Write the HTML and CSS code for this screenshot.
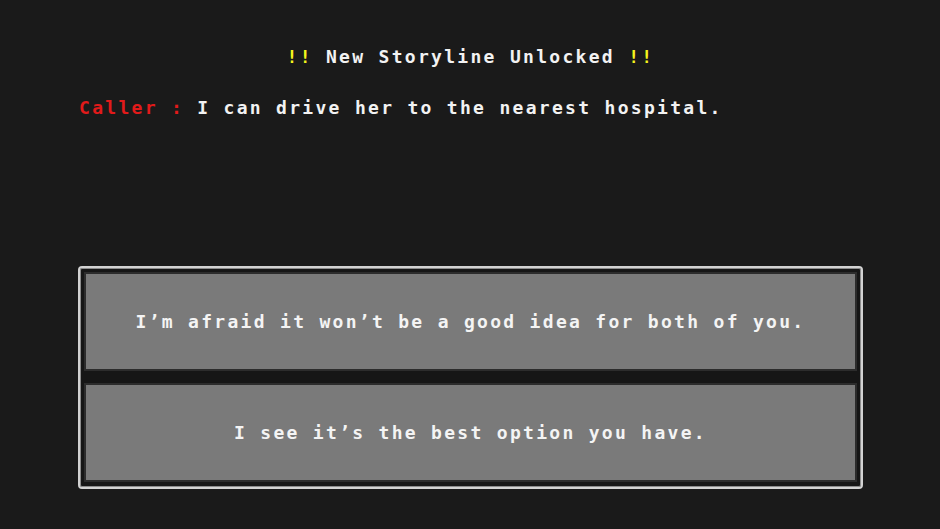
FILE: index.html
```html
<!DOCTYPE html>
<html lang="en">
<head>
  <meta charset="UTF-8" />
  <meta name="viewport" content="width=device-width, initial-scale=1" />
  <title>New Storyline Unlocked</title>
  <link rel="stylesheet" href="styles.css">
</head>
<body>

<div class="scene">
  <h1 class="notice">
    <span class="bang">!!</span> New Storyline Unlocked <span class="bang">!!</span>
  </h1>

  <p class="dialogue">
    <span class="speaker">Caller :</span> I can drive her to the nearest hospital.
  </p>

  <div class="choices">
    <button class="choice" type="button">I’m afraid it won’t be a good idea for both of you.</button>
    <button class="choice" type="button">I see it’s the best option you have.</button>
  </div>
</div>

</body>
</html>
```

FILE: styles.css
```css
body {
  background: #1a1a1a;
  color: #f2f2f2;
  font-family: "DejaVu Sans Mono", "Liberation Mono", monospace;
  font-weight: bold;
  margin: 0;
}
.scene {
  padding: 40px 77px 0 78px;
}
.notice {
  margin: 0;
  font-size: 18px;
  line-height: 34px;
  letter-spacing: 2.3px;
  text-align: center;
  font-weight: bold;
}
.bang {
  color: #f4f41c;
}
.dialogue {
  margin: 22px 0 0;
  padding-left: 1px;
  font-size: 18px;
  line-height: 24px;
  letter-spacing: 2.3px;
}
.speaker {
  color: #e21a1a;
}
.choices {
  margin-top: 146px;
  display: flex;
  flex-direction: column;
  gap: 12px;
  padding: 4px 4px 5px;
  background: #161616;
  border: 2px solid #d2d2d2;
  border-radius: 4px;
  box-shadow: inset 0 0 0 1px #8c8c8c;
}
.choice {
  height: 99px;
  background: #7a7a7a;
  border: 2px solid #2c2c2c;
  color: #f4f4f4;
  font-family: inherit;
  font-weight: bold;
  font-size: 18px;
  letter-spacing: 2.3px;
  cursor: pointer;
}
.choice:hover {
  background: #868686;
}
```
